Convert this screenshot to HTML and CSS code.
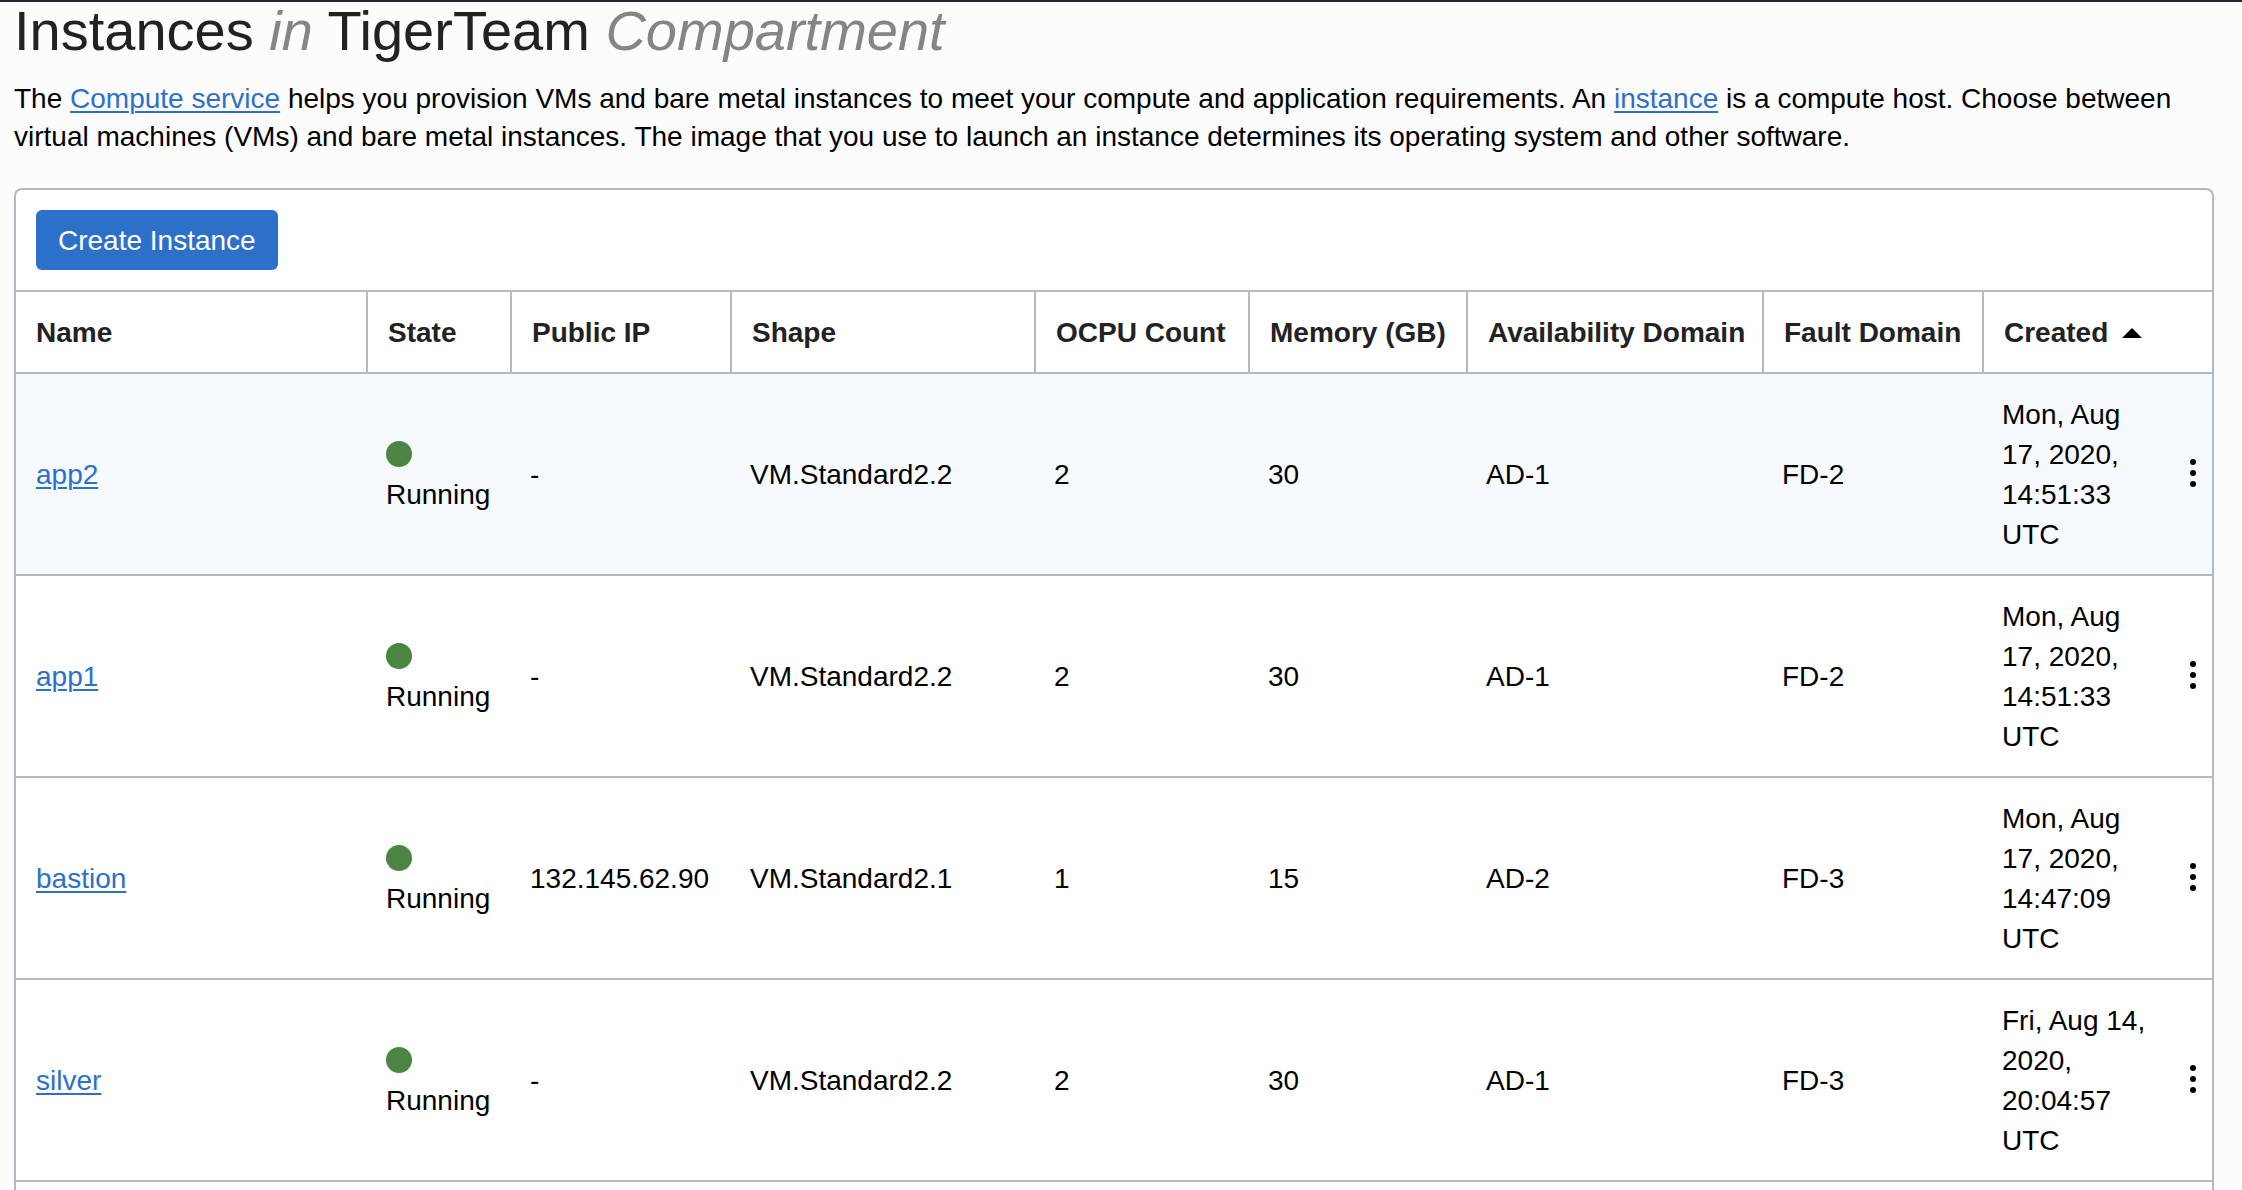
FILE: index.html
```html
<!DOCTYPE html>
<html lang="en">
<head>
<meta charset="utf-8">
<title>Instances</title>
<meta name="viewport" content="width=device-width, initial-scale=1">
<link rel="stylesheet" href="styles.css">
</head>
<body>
<main class="page">
  <h1 class="title">Instances <em>in</em> TigerTeam <em>Compartment</em></h1>
  <p class="intro">The <a href="#compute">Compute service</a> helps you provision VMs and bare metal instances to meet your compute and application requirements. An <a href="#instance">instance</a> is a compute host. Choose between virtual machines (VMs) and bare metal instances. The image that you use to launch an instance determines its operating system and other software.</p>
  <section class="panel">
    <div class="toolbar"><button type="button" class="create">Create Instance</button></div>
    <table class="instances">
      <colgroup>
        <col class="col-name"><col class="col-state"><col class="col-ip"><col class="col-shape"><col class="col-ocpu"><col class="col-memory"><col class="col-ad"><col class="col-fd"><col class="col-created"><col class="col-actions">
      </colgroup>
      <thead>
        <tr>
          <th scope="col">Name</th>
          <th scope="col">State</th>
          <th scope="col">Public IP</th>
          <th scope="col">Shape</th>
          <th scope="col">OCPU Count</th>
          <th scope="col">Memory (GB)</th>
          <th scope="col">Availability Domain</th>
          <th scope="col">Fault Domain</th>
          <th scope="col" colspan="2" aria-sort="ascending"><span class="sorted">Created <svg class="arrow" viewBox="0 0 20 10" aria-hidden="true"><path d="M0 10 10 0 20 10Z"/></svg></span></th>
        </tr>
      </thead>
      <tbody>
        <tr class="hovered">
          <td><a href="#app2">app2</a></td>
          <td><span class="dot"></span>Running</td>
          <td>-</td>
          <td>VM.Standard2.2</td>
          <td>2</td>
          <td>30</td>
          <td>AD-1</td>
          <td>FD-2</td>
          <td>Mon, Aug 17, 2020, 14:51:33 UTC</td>
          <td class="actions"><button type="button" class="menu" aria-label="Actions for app2"><svg viewBox="0 0 6 28"><circle cx="3" cy="3" r="3"/><circle cx="3" cy="14" r="3"/><circle cx="3" cy="25" r="3"/></svg></button></td>
        </tr>
        <tr>
          <td><a href="#app1">app1</a></td>
          <td><span class="dot"></span>Running</td>
          <td>-</td>
          <td>VM.Standard2.2</td>
          <td>2</td>
          <td>30</td>
          <td>AD-1</td>
          <td>FD-2</td>
          <td>Mon, Aug 17, 2020, 14:51:33 UTC</td>
          <td class="actions"><button type="button" class="menu" aria-label="Actions for app1"><svg viewBox="0 0 6 28"><circle cx="3" cy="3" r="3"/><circle cx="3" cy="14" r="3"/><circle cx="3" cy="25" r="3"/></svg></button></td>
        </tr>
        <tr>
          <td><a href="#bastion">bastion</a></td>
          <td><span class="dot"></span>Running</td>
          <td>132.145.62.90</td>
          <td>VM.Standard2.1</td>
          <td>1</td>
          <td>15</td>
          <td>AD-2</td>
          <td>FD-3</td>
          <td>Mon, Aug 17, 2020, 14:47:09 UTC</td>
          <td class="actions"><button type="button" class="menu" aria-label="Actions for bastion"><svg viewBox="0 0 6 28"><circle cx="3" cy="3" r="3"/><circle cx="3" cy="14" r="3"/><circle cx="3" cy="25" r="3"/></svg></button></td>
        </tr>
        <tr>
          <td><a href="#silver">silver</a></td>
          <td><span class="dot"></span>Running</td>
          <td>-</td>
          <td>VM.Standard2.2</td>
          <td>2</td>
          <td>30</td>
          <td>AD-1</td>
          <td>FD-3</td>
          <td>Fri, Aug 14, 2020, 20:04:57 UTC</td>
          <td class="actions"><button type="button" class="menu" aria-label="Actions for silver"><svg viewBox="0 0 6 28"><circle cx="3" cy="3" r="3"/><circle cx="3" cy="14" r="3"/><circle cx="3" cy="25" r="3"/></svg></button></td>
        </tr>
      </tbody>
    </table>
  </section>
</main>
</body>
</html>
```
FILE: styles.css
```css
:root {
  --line: #b5bac1;
  --blue: #2d70c9;
}

* {
  box-sizing: border-box;
}

body {
  margin: 0;
  background: #fcfcfc;
  color: #000;
  font: 28px/38px "Liberation Sans", Arial, sans-serif;
}

a {
  color: var(--blue);
  text-decoration-thickness: 2px;
  text-underline-offset: 3px;
}

.page {
  display: flex;
  flex-direction: column;
  min-height: 100vh;
  padding: 0 28px 0 14px;
  border-top: 2px solid #1e2733;
}

.title {
  margin: 0 0 20px;
  color: #222;
  font-size: 56px;
  font-weight: 400;
  line-height: 58px;
}

.title em {
  color: #858585;
}

.intro {
  margin: 0 0 32px;
}

.panel {
  flex: 1;
  background: #fff;
  border: 2px solid var(--line);
  border-bottom: 0;
  border-radius: 8px 8px 0 0;
}

.toolbar {
  padding: 20px;
  border-bottom: 2px solid var(--line);
}

.create {
  display: block;
  height: 60px;
  padding: 1px 22px 0;
  border: 0;
  border-radius: 6px;
  background: var(--blue);
  color: #fff;
  font: inherit;
}

.instances {
  width: 100%;
  table-layout: fixed;
  border-collapse: separate;
  border-spacing: 0;
  line-height: 40px;
}

.col-state { width: 144px; }
.col-ip { width: 220px; }
.col-shape { width: 304px; }
.col-ocpu { width: 214px; }
.col-memory { width: 218px; }
.col-ad { width: 296px; }
.col-fd { width: 220px; }
.col-created { width: 192px; }
.col-actions { width: 38px; }

th,
td {
  padding: 21px 0 19px 20px;
  border-bottom: 2px solid var(--line);
  text-align: left;
  vertical-align: middle;
}

td {
  padding-right: 20px;
}

th {
  color: #222;
  white-space: nowrap;
}

th + th {
  border-left: 2px solid var(--line);
}

.hovered {
  background: #f6f9fe;
}

.sorted {
  display: flex;
  align-items: center;
  gap: 14px;
}

.arrow {
  width: 20px;
  height: 10px;
  fill: #000;
}

.dot {
  display: block;
  width: 26px;
  height: 26px;
  margin: 6px 0 8px;
  border-radius: 50%;
  background: #4c8443;
}

.actions {
  padding: 0;
}

.menu {
  display: flex;
  justify-content: center;
  width: 100%;
  padding: 5px 0 7px;
  border: 0;
  background: none;
}

.menu svg {
  width: 6px;
  height: 28px;
}
```
